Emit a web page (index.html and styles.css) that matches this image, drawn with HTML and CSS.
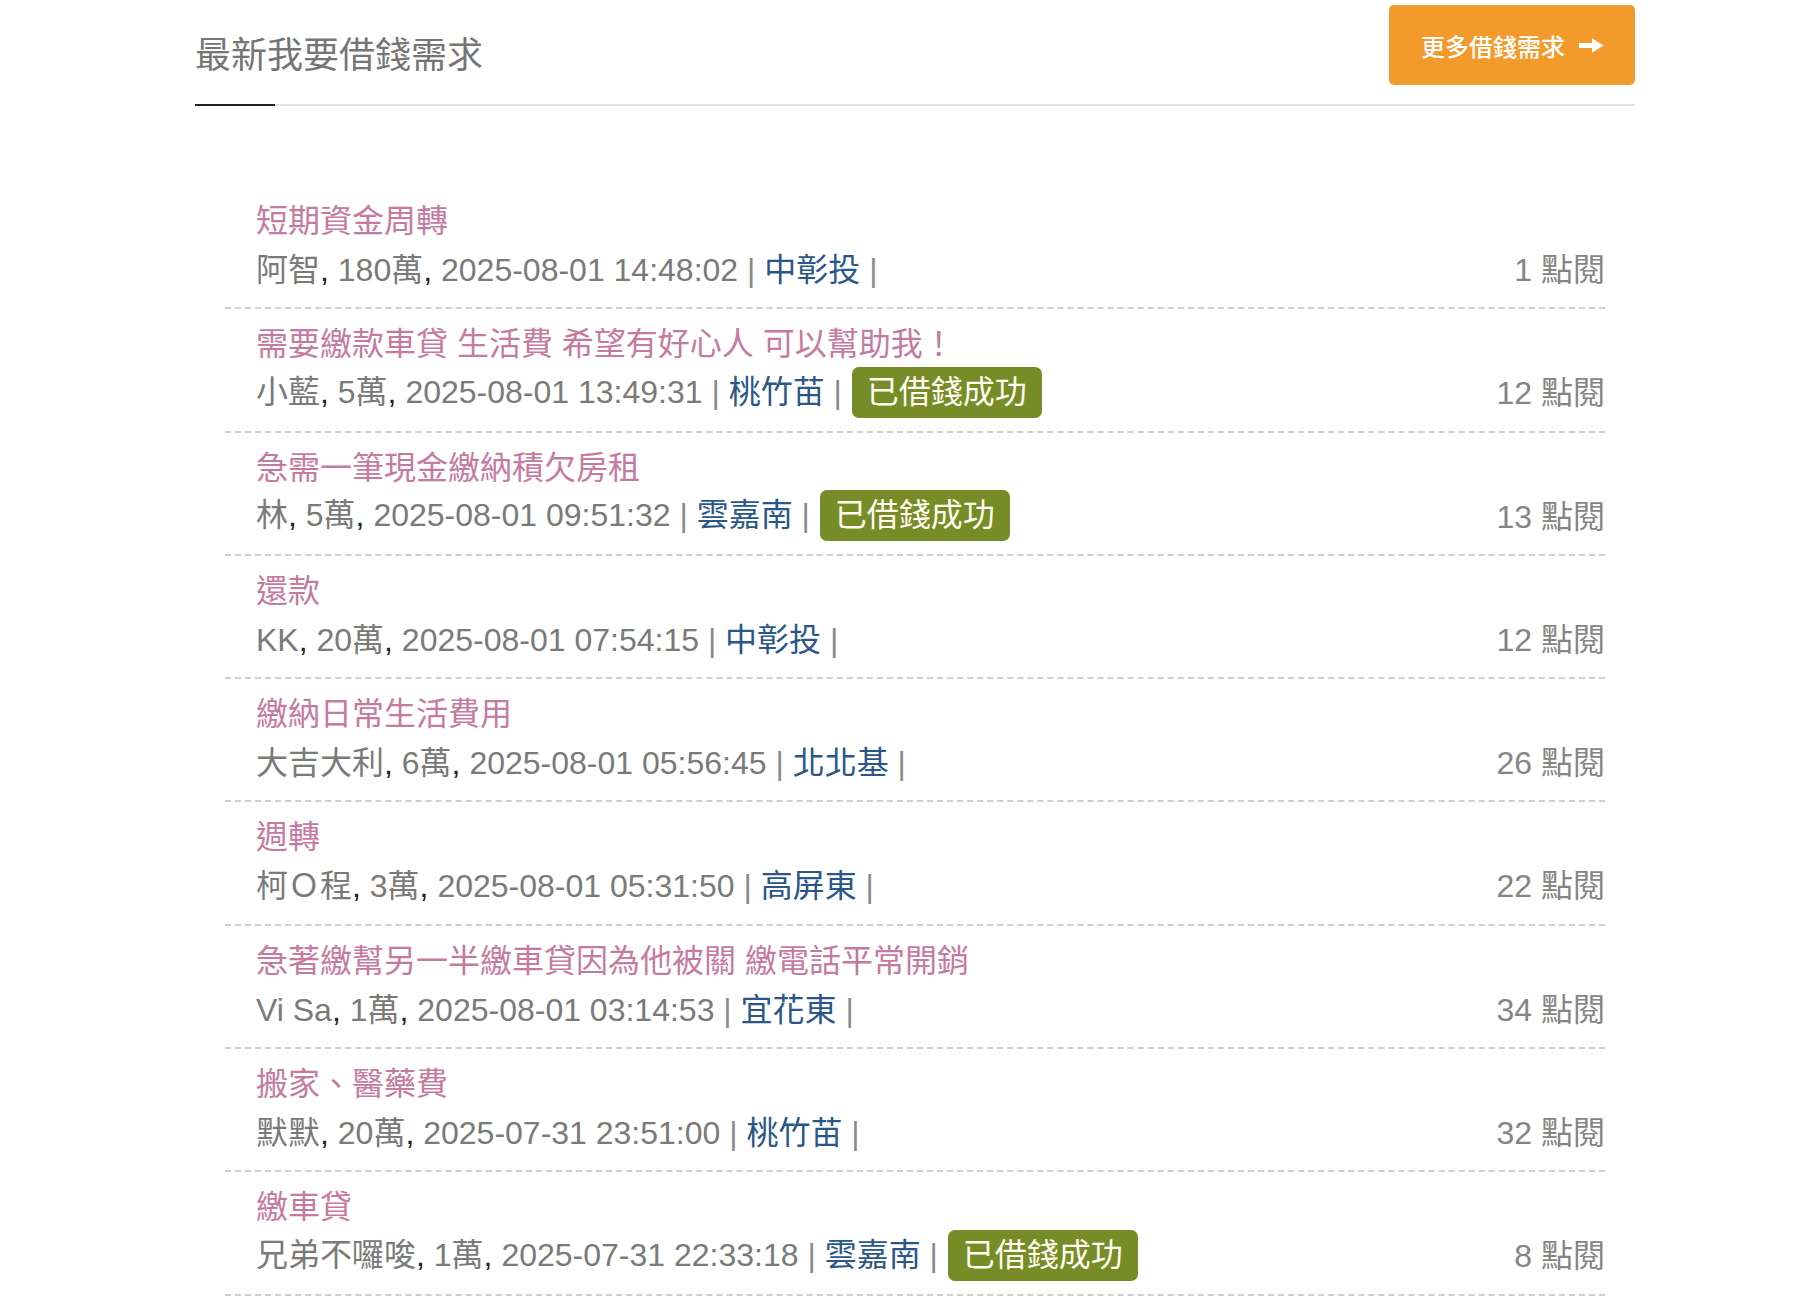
FILE: index.html
```html
<!DOCTYPE html>
<html lang="zh-Hant">

<head>
	<meta charset="UTF-8">
	<meta name="viewport" content="width=device-width, initial-scale=1.0">
	<title>最新我要借錢需求</title>
	<link rel="stylesheet" href="styles.css">
</head>

<body>
	<div class="container">
		<div class="header">
			<h2 class="headerTitle">最新我要借錢需求</h2>
			<a href="#" class="moreButton">更多借錢需求
				<svg class="arrow" viewBox="0 0 24 16" width="24" height="16">
					<path d="M0 5.5h12.5V1l11 7-11 7v-4.5H0z" fill="#fff" />
				</svg>
			</a>
		</div>

		<ul class="loanList">
			<li class="loanItem">
				<a href="#" class="loanTitle">短期資金周轉</a>
				<div class="loanMeta">
					<span class="info"><span class="gray">阿智</span>, <span class="gray">180萬</span>, <span class="gray">2025-08-01 14:48:02</span> <span class="sep">|</span> <span class="region">中彰投</span> <span class="sep">|</span></span>
					<span class="views">1 點閱</span>
				</div>
			</li>
			<li class="loanItem">
				<a href="#" class="loanTitle">需要繳款車貸 生活費 希望有好心人 可以幫助我！</a>
				<div class="loanMeta">
					<span class="info"><span class="gray">小藍</span>, <span class="gray">5萬</span>, <span class="gray">2025-08-01 13:49:31</span> <span class="sep">|</span> <span class="region">桃竹苗</span> <span class="sep">|</span> <span class="badge">已借錢成功</span></span>
					<span class="views">12 點閱</span>
				</div>
			</li>
			<li class="loanItem">
				<a href="#" class="loanTitle">急需一筆現金繳納積欠房租</a>
				<div class="loanMeta">
					<span class="info"><span class="gray">林</span>, <span class="gray">5萬</span>, <span class="gray">2025-08-01 09:51:32</span> <span class="sep">|</span> <span class="region">雲嘉南</span> <span class="sep">|</span> <span class="badge">已借錢成功</span></span>
					<span class="views">13 點閱</span>
				</div>
			</li>
			<li class="loanItem">
				<a href="#" class="loanTitle">還款</a>
				<div class="loanMeta">
					<span class="info"><span class="gray">KK</span>, <span class="gray">20萬</span>, <span class="gray">2025-08-01 07:54:15</span> <span class="sep">|</span> <span class="region">中彰投</span> <span class="sep">|</span></span>
					<span class="views">12 點閱</span>
				</div>
			</li>
			<li class="loanItem">
				<a href="#" class="loanTitle">繳納日常生活費用</a>
				<div class="loanMeta">
					<span class="info"><span class="gray">大吉大利</span>, <span class="gray">6萬</span>, <span class="gray">2025-08-01 05:56:45</span> <span class="sep">|</span> <span class="region">北北基</span> <span class="sep">|</span></span>
					<span class="views">26 點閱</span>
				</div>
			</li>
			<li class="loanItem">
				<a href="#" class="loanTitle">週轉</a>
				<div class="loanMeta">
					<span class="info"><span class="gray">柯Ｏ程</span>, <span class="gray">3萬</span>, <span class="gray">2025-08-01 05:31:50</span> <span class="sep">|</span> <span class="region">高屏東</span> <span class="sep">|</span></span>
					<span class="views">22 點閱</span>
				</div>
			</li>
			<li class="loanItem">
				<a href="#" class="loanTitle">急著繳幫另一半繳車貸因為他被關 繳電話平常開銷</a>
				<div class="loanMeta">
					<span class="info"><span class="gray">Vi Sa</span>, <span class="gray">1萬</span>, <span class="gray">2025-08-01 03:14:53</span> <span class="sep">|</span> <span class="region">宜花東</span> <span class="sep">|</span></span>
					<span class="views">34 點閱</span>
				</div>
			</li>
			<li class="loanItem">
				<a href="#" class="loanTitle">搬家、醫藥費</a>
				<div class="loanMeta">
					<span class="info"><span class="gray">默默</span>, <span class="gray">20萬</span>, <span class="gray">2025-07-31 23:51:00</span> <span class="sep">|</span> <span class="region">桃竹苗</span> <span class="sep">|</span></span>
					<span class="views">32 點閱</span>
				</div>
			</li>
			<li class="loanItem">
				<a href="#" class="loanTitle">繳車貸</a>
				<div class="loanMeta">
					<span class="info"><span class="gray">兄弟不囉唆</span>, <span class="gray">1萬</span>, <span class="gray">2025-07-31 22:33:18</span> <span class="sep">|</span> <span class="region">雲嘉南</span> <span class="sep">|</span> <span class="badge">已借錢成功</span></span>
					<span class="views">8 點閱</span>
				</div>
			</li>
		</ul>
	</div>
</body>

</html>
```

FILE: styles.css
```css
body,
html {
	margin: 0;
	padding: 0;
	background-color: #fff;
}

body {
	font-family: "Liberation Sans", "Noto Sans CJK TC", sans-serif;
	color: #222;
}

.container {
	width: 1440px;
	margin-left: 195px;
}

.header {
	display: flex;
	justify-content: space-between;
	align-items: flex-start;
	position: relative;
	height: 104px;
	border-bottom: 2px solid #e2e2e2;
	box-sizing: content-box;
}

.header::after {
	content: "";
	position: absolute;
	left: 0;
	bottom: -2px;
	width: 80px;
	height: 2px;
	background-color: #222;
}

.headerTitle {
	margin: 36px 0 0 0;
	font-size: 36px;
	line-height: 40px;
	font-weight: normal;
	color: #757575;
}

.moreButton {
	display: flex;
	align-items: center;
	gap: 14px;
	margin-top: 5px;
	height: 80px;
	padding: 0 31px 0 32px;
	box-sizing: border-box;
	background-color: #f39a2c;
	border-radius: 5px;
	color: #fff;
	font-size: 24px;
	font-weight: 500;
	text-decoration: none;
}

.arrow {
	display: block;
	width: 25px;
	height: 17px;
}

.loanList {
	list-style: none;
	margin: 80px 30px 0 30px;
	padding: 0;
}

.loanItem {
	padding: 11px 0 12.3px 31px;
	border-bottom: 2px dashed #cfcfcf;
	font-size: 32px;
	line-height: 49px;
}

.loanTitle {
	display: block;
	color: #c57aa2;
	text-decoration: none;
}

.loanMeta {
	display: flex;
	justify-content: space-between;
	align-items: center;
	height: 49px;
}

.info {
	white-space: nowrap;
}

.gray {
	color: #7a7a7a;
}

.sep {
	color: #8a8a8a;
}

.region {
	color: #2b5788;
}

.badge {
	display: inline-block;
	vertical-align: middle;
	margin-left: 1px;
	padding: 0 15px;
	height: 51px;
	line-height: 51px;
	border-radius: 7px;
	background-color: #778b26;
	color: #fffdf0;
	position: relative;
	top: -2px;
}

.views {
	color: #858585;
}
```
